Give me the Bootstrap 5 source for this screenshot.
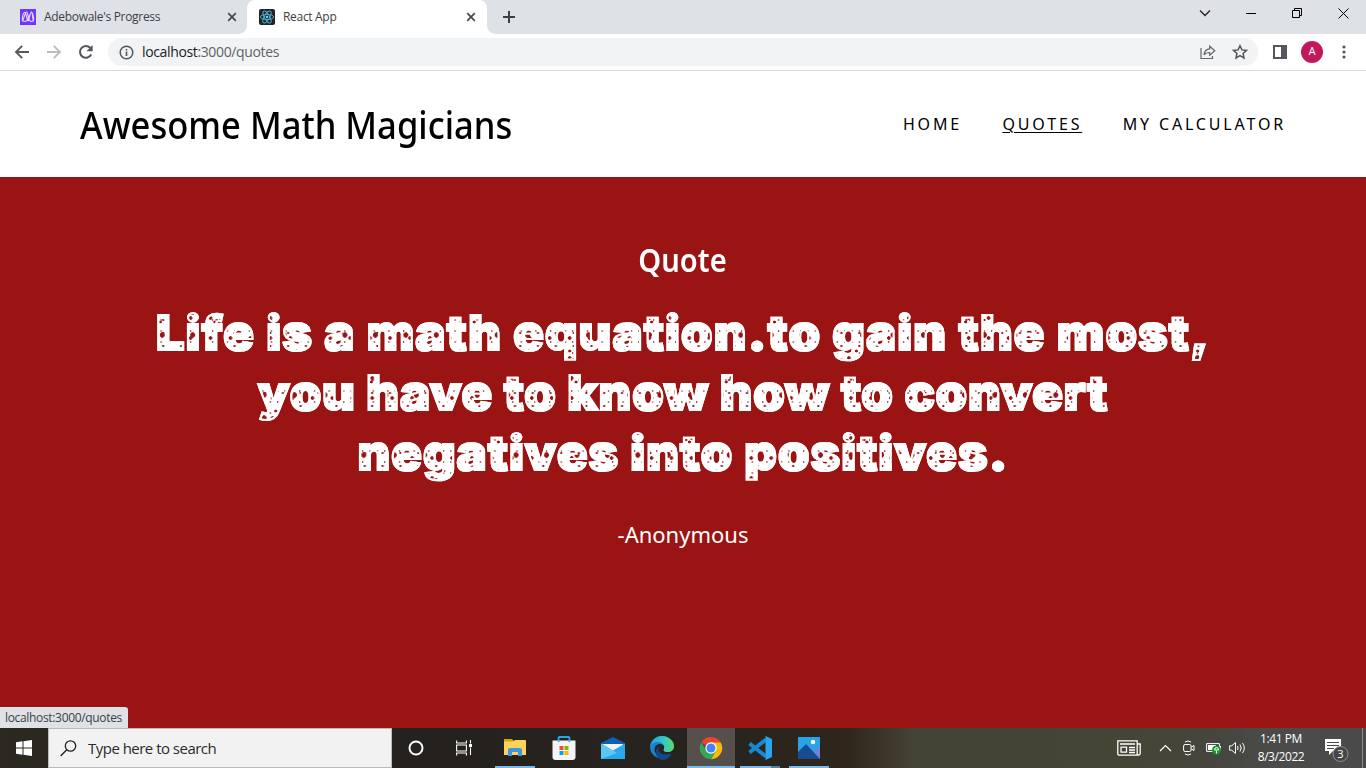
<!DOCTYPE html>
<html lang="en">
<head>
<meta charset="utf-8">
<title>React App</title>
<link href="https://cdn.jsdelivr.net/npm/bootstrap@5.3.0/dist/css/bootstrap.min.css" rel="stylesheet">
<style>
body{width:1366px;height:768px;overflow:hidden;font-family:"Noto Sans","Open Sans",sans-serif;color:#000}
svg{display:block;flex:none}
.cell{display:flex;align-items:center;justify-content:center;flex:none}
.w32{width:32px}.w24{width:24px}.w46{width:46px}.w48{width:48px}.w44{width:44px}.w20{width:20px}
/* browser */
.strip{height:34px;background:#dee1e6;font:12px/16px "Open Sans",sans-serif;color:#3c4043;letter-spacing:-.31px}
.tab-item{height:34px;flex:none}
.tab-item.bg-tab{width:247px;padding:0 8px 0 20px}
.tab-item.live{width:240px;padding:0 9px 0 12px;background:#fff;border-radius:8px 8px 0 0;position:relative}
.tab-item.live::before,.tab-item.live::after{content:"";position:absolute;bottom:0;width:8px;height:8px}
.tab-item.live::before{left:-8px;background:radial-gradient(circle at 0 0,#0000 7.5px,#fff 8px)}
.tab-item.live::after{right:-8px;background:radial-gradient(circle at 100% 0,#0000 7.5px,#fff 8px)}
.tools{height:37px;border-bottom:1px solid #dadce0;padding:0 0 0 6px}
.omni{height:28px;width:1150px;flex:none;border-radius:14px;background:#f1f3f4;font:14px/28px "Open Sans",sans-serif;letter-spacing:-.36px;color:#5f6368;margin-left:6px;padding:0 2px 0 11px}
.omni b{font-weight:400;color:#202124}
.me{width:22px;height:22px;border-radius:50%;background:#c2185b;color:#fff;font:11px/22px Roboto,sans-serif;text-align:center}
/* page */
.site-head{height:106px;padding:0 80px}
.narrow{display:inline-block;transform:scaleX(.91)}
.brand{font-size:38px;line-height:50px;font-weight:500;margin:0;width:440px;white-space:nowrap}
.brand .narrow{transform-origin:0 50%}
.menu{font-size:16px;letter-spacing:2.830px;gap:40.500px;line-height:24px}
.menu a{color:#000;text-decoration:none}
.menu a.on{text-decoration:underline;text-underline-offset:2px;text-decoration-thickness:1px}
.hero{height:551px;background:#9b1414;color:#fff;position:relative}
.hero h2{font-size:32px;line-height:40px;font-weight:600;margin:0;padding-top:63px}
.said{font:900 48px/60px Inter,sans-serif;letter-spacing:1px;margin:23px 0 0;transform:scaleX(1.050)}
.said div{white-space:nowrap}
.said .top-line{letter-spacing:1.100px}
.said .mid{letter-spacing:.75px}
.said span{--r:#9b1414;color:#fff;-webkit-text-fill-color:transparent;-webkit-text-stroke:2px #fff;
background:
radial-gradient(ellipse 2.6px 3.2px at 6px 9px,var(--r) 75%,#0000),
radial-gradient(circle at 14px 15px,var(--r) 1.5px,#0000 2px),
radial-gradient(circle at 4px 19px,var(--r) 1.200px,#0000 1.700px),
radial-gradient(circle at 7px 4px,var(--r) .8px,#0000 1.300px),
radial-gradient(circle at 5px 6px,var(--r) .4px,#0000 1px) #fff;
background-size:29px 23px,19px 20px,13px 29px,17px 13px,7px 11px;
-webkit-background-clip:text;background-clip:text}
.who{font-size:22px;line-height:30px;margin:36px 0 0}
.status-tip{position:absolute;left:0;bottom:0;width:128px;height:21px;background:#dee1e6;border-radius:0 3px 0 0;color:#3c4043;font:12px/21px "Open Sans",sans-serif;letter-spacing:-.330px;padding-left:5px}
/* taskbar */
.taskbar{height:40px;background:linear-gradient(90deg,#2b2920 0,#24211e 30%,#28241e 55%,#30261b 62%,#444435 67%,#454536 82%,#45453c 88%,#4b4b4b 94%,#4a4a4a);color:#fff}
.find{width:344px;height:40px;background:#f2f2f2;border:1px solid #bbb;color:#2b2b2b;font:15px/38px "Open Sans",sans-serif;letter-spacing:-.520px;padding-left:11px;gap:11px}
.gap-r{margin-right:3px}
.app{width:48px;height:40px;position:relative;margin-right:1px}
.app.open::after{content:"";position:absolute;left:4px;right:4px;bottom:0;height:2px;background:#76b9ed}
.app.now{background:#55504c}.app.now::after{left:0;right:0}
.app.multi::after{background:linear-gradient(90deg,#76b9ed 31px,#5583a7 31px)}
.clock{width:64px;font:12px/18px "Open Sans",sans-serif;letter-spacing:-.420px;text-align:center}
.notes{width:49px;padding:4px 2px 0 0}
.peek{width:4px;height:40px;border-left:1px solid #8a8a8a}
</style>
</head>
<body class="d-flex flex-column bg-white">
<div class="strip d-flex align-items-center">
  <div class="tab-item bg-tab d-flex align-items-center">
    <svg width="16" height="16" viewBox="0 0 16 16"><path fill="#6f37ff" d="M0 0h16v16H0z"/><g fill="none" stroke="#e8dcff" stroke-width="1.1"><path d="M2 12C4 11 5 3 6.500 3S8 12 11 12.500c2.500 0 3-2 2.500-4C13 5 12.400 3.500 11.300 3.500 9.500 3.500 9 12.500 5 12.500 2.500 12.500 2 10.500 2.500 8 3 5 3.600 3.500 4.700 3.500 6.500 3.500 7 12 8 12s2-9 3.500-9S12 11 14 12"/></g></svg>
    <span class="ms-2">Adebowale's Progress</span>
    <svg class="ms-auto" width="14" height="14" viewBox="0 0 14 14"><path d="M3.200 3.200l7.600 7.600M10.800 3.200l-7.600 7.600" stroke="#45484c" stroke-width="1.700"/></svg>
  </div>
  <div class="tab-item live d-flex align-items-center">
    <svg width="16" height="16" viewBox="0 0 16 16"><rect width="16" height="16" rx="2" fill="#20232a"/><g fill="none" stroke="#4fb3cc" stroke-width=".9"><ellipse cx="8" cy="8" rx="6.700" ry="2.600"/><ellipse cx="8" cy="8" rx="6.700" ry="2.600" transform="rotate(60 8 8)"/><ellipse cx="8" cy="8" rx="6.700" ry="2.600" transform="rotate(120 8 8)"/></g><circle cx="8" cy="8" r="1.300" fill="#61dafb"/></svg>
    <span class="ms-2">React App</span>
    <svg class="ms-auto" width="14" height="14" viewBox="0 0 14 14"><path d="M3.200 3.200l7.600 7.600M10.800 3.200l-7.600 7.600" stroke="#45484c" stroke-width="1.700"/></svg>
  </div>
  <svg class="mx-3" width="12" height="12" viewBox="0 0 12 12"><path d="M6 0v12M0 6h12" stroke="#3c4043" stroke-width="2"/></svg>
  <div class="d-flex ms-auto pb-1 mb-1">
    <div class="cell w46"><svg width="12" height="8" viewBox="0 0 12 8"><path d="M1 1.500l5 5 5-5" fill="none" stroke="#222" stroke-width="1.300"/></svg></div>
    <div class="cell w46"><svg width="10" height="1"><path d="M0 0h10v1H0z"/></svg></div>
    <div class="cell w46"><svg width="10" height="10" viewBox="0 0 10 10"><path d="M.5 2.500h7v7h-7zM2.500 2.500v-2h7v7h-2" fill="none" stroke="#000"/></svg></div>
    <div class="cell w46"><svg width="11" height="11" viewBox="0 0 11 11"><path d="M.5.5l10 10M10.500.5l-10 10" fill="none" stroke="#000"/></svg></div>
  </div>
</div>
<div class="tools d-flex align-items-center">
  <div class="cell w32"><svg width="16" height="16" viewBox="0 0 16 16"><path d="M15 8H2.500M8.200 1.800L2 8l6.200 6.200" fill="none" stroke="#54585d" stroke-width="1.900"/></svg></div>
  <div class="cell w32"><svg width="16" height="16" viewBox="0 0 16 16"><path d="M1 8h12.500M7.800 1.800L14 8l-6.200 6.200" fill="none" stroke="#b9bcc0" stroke-width="1.900"/></svg></div>
  <div class="cell w32"><svg width="16" height="16" viewBox="0 0 16 16"><path d="M13.200 10.500A5.900 5.900 0 1 1 12.200 3.800L13 4.700" fill="none" stroke="#54585d" stroke-width="2"/><path fill="#54585d" d="M14.700 1v6.300H8.400z"/></svg></div>
  <div class="omni d-flex align-items-center">
    <svg class="me-2" width="15" height="15" viewBox="0 0 15 15"><circle cx="7.500" cy="7.500" r="6.300" fill="none" stroke="#54585d" stroke-width="1.500"/><path d="M6.700 6.600h1.600v4.300H6.700zM6.700 3.900h1.600v1.600H6.700z" fill="#54585d"/></svg>
    <span><b>localhost</b>:3000/quotes</span>
    <div class="cell w32 ms-auto"><svg width="16" height="16" viewBox="0 0 16 16"><path d="M1 4v10.500h11.500V12" fill="none" stroke="#63676b" stroke-width="1.200"/><path d="M9.700 2.200L14.800 6.700l-5.100 4.500V8.500C7 8.400 5.300 9 4 10.800 4.400 7.500 6.200 5.200 9.700 4.900z" fill="none" stroke="#63676b" stroke-width="1.200"/></svg></div>
    <div class="cell w32"><svg width="16" height="16" viewBox="0 0 16 16"><path d="M8 1.700l1.900 4.200 4.600.5-3.400 3.100.9 4.500-4-2.300-4 2.300.9-4.500L1.500 6.400l4.600-.5z" fill="none" stroke="#54585d" stroke-width="1.500"/></svg></div>
  </div>
  <div class="cell w44"><svg width="14" height="14" viewBox="0 0 14 14"><path fill="#54585d" fill-rule="evenodd" d="M0 0h14v14H0zM2 2v10h6V2z"/></svg></div>
  <div class="cell w20"><div class="me flex-shrink-0">A</div></div>
  <div class="cell w44"><svg width="4" height="14" viewBox="0 0 4 14"><g fill="#54585d"><circle cx="2" cy="2" r="1.600"/><circle cx="2" cy="7" r="1.600"/><circle cx="2" cy="12" r="1.600"/></g></svg></div>
</div>
<header class="site-head d-flex align-items-center justify-content-between">
  <h1 class="brand"><span class="narrow">Awesome Math Magicians</span></h1>
  <nav class="menu d-flex">
    <a href="#">HOME</a><a href="#" class="on">QUOTES</a><a href="#">MY CALCULATOR</a>
  </nav>
</header>
<main class="hero text-center">
  <h2><span class="narrow">Quote</span></h2>
  <div class="said">
    <div class="top-line"><span>Life is a math equation.to gain the most,</span></div>
    <div class="mid"><span>you have to know how to convert</span></div>
    <div><span>negatives into positives.</span></div>
  </div>
  <p class="who">-Anonymous</p>
  <div class="status-tip text-start">localhost:3000/quotes</div>
</main>
<footer class="taskbar d-flex align-items-center">
  <div class="cell w48"><svg width="16" height="16" viewBox="0 0 16 16"><path fill="#fff" d="M0 2.200L6.500 1.300v6.200H0zM7.500 1.200L16 0v7.500H7.500zM0 8.500h6.500v6.200L0 13.800zM7.500 8.500H16V16l-8.500-1.200z"/></svg></div>
  <div class="find d-flex align-items-center">
    <svg width="17" height="17" viewBox="0 0 17 17"><circle cx="10.500" cy="6" r="5.200" fill="none" stroke="#222" stroke-width="1.300"/><path d="M6.800 9.700L.6 16" stroke="#222" stroke-width="1.400"/></svg>
    <span>Type here to search</span>
  </div>
  <div class="cell w48"><svg width="16" height="16"><circle cx="8" cy="8" r="6.500" fill="none" stroke="#fff" stroke-width="2"/></svg></div>
  <div class="cell w48 gap-r"><svg width="16" height="16" viewBox="0 0 16 16"><g fill="none" stroke="#fff" stroke-width="1.100"><path d="M.6.500v2.500h9.800V.500M.6 15.500V13h9.800v2.500M.6 5h9.800v6H.6zM14.500 0v3.500M14.500 7.500V15"/></g><path d="M13 4h3v3h-3z" fill="#fff"/></svg></div>
  <div class="cell app open"><svg width="22" height="20" viewBox="0 0 22 20"><path fill="#e0a100" d="M0 1h8l2 2v4H0z"/><path fill="#ffd35a" d="M0 3.500h9L11 2h10a1 1 0 0 1 1 1v14H0z"/><path fill="#3e96dd" d="M4 18v-6a2 2 0 0 1 2-2h10a2 2 0 0 1 2 2v6h-4v-4H8v4z"/></svg></div>
  <div class="cell app"><svg width="24" height="24" viewBox="0 0 24 24"><path fill="none" stroke="#21a7ea" stroke-width="1.800" d="M6.500 6V2q0-1 1-1h9q1 0 1 1v4"/><path fill="#f3f4f6" d="M.5 4.500h23V21a3 3 0 0 1-3 3h-17a3 3 0 0 1-3-3z"/><path fill="#21a7ea" d="M5.600 4.500h1.800V6H5.600zM16.600 4.500h1.800V6h-1.800z"/><path fill="#f25022" d="M7.500 10h4v4h-4z"/><path fill="#7fba00" d="M12.500 10h4v4h-4z"/><path fill="#00a4ef" d="M7.500 15h4v4h-4z"/><path fill="#ffb900" d="M12.500 15h4v4h-4z"/></svg></div>
  <div class="cell app"><svg width="24" height="22" viewBox="0 0 24 22"><path fill="#0f5fb5" d="M0 6L12 0l12 6v6H0z"/><path fill="#f4f4f4" d="M2 7h20v4l-10 5L2 11z"/><path fill="#29a8ea" d="M0 6.500l12 7 12-7V22H0z"/><path fill="#59c8f6" d="M0 22V6.500L16 16z"/></svg></div>
  <div class="cell app"><svg width="24" height="24" viewBox="0 0 24 24"><defs><linearGradient id="e1"><stop stop-color="#239ee0"/><stop offset=".6" stop-color="#38c9c8"/><stop offset="1" stop-color="#60d957"/></linearGradient></defs><path fill="#1683d2" d="M0 11C1 4 6 0 12 0s12 4.500 12 10c0 4-3 6-6.500 6-3 0-5-1-3.500-3 1-2 0-5-4-5-5 0-7 5-4 10 2 4 6 5 10 4A12 12 0 0 1 0 11z"/><path fill="url(#e1)" d="M0 11C1 4 6 0 12 0s12 4.500 12 10c0 4-3 6-6.500 6-3 0-4.500-1-3.500-3 1-3-1-7-6-7-4 0-7 2-8 5z"/><path fill="#114a8c" d="M8.500 10C7 17 13 20 21.500 17.500 19.500 22 16 24 12 24 6 23 4 15 8.500 10z"/></svg></div>
  <div class="cell app open now"><svg width="24" height="24" viewBox="0 0 24 24"><path fill="#ea4335" d="M12 12L2.300 6.500a11.200 11.200 0 0 1 19.400 0z"/><path fill="#fbbc05" d="M12 12V6.400h9.700A11.200 11.200 0 0 1 12 23.200l4.800-8.400z"/><path fill="#34a853" d="M2.300 6.400l4.900 8.400L12 17.600l4.800-2.800L12 23.200A11.200 11.200 0 0 1 2.300 6.400z"/><circle cx="12" cy="12" r="5.700" fill="#fff"/><circle cx="12" cy="12" r="4.500" fill="#4285f4"/></svg></div>
  <div class="cell app open multi"><svg width="24" height="24" viewBox="0 0 24 24"><path d="M1.500 7.500L18 20.500M1.500 16.500L18 3.500" stroke="#1689d2" stroke-width="4"/><path fill="#2ba6ee" d="M17.500 0L24 3v18l-6.500 3z"/></svg></div>
  <div class="cell app open"><svg width="22" height="22" viewBox="0 0 22 22"><path fill="#2ba3e8" d="M0 0h22v22H0z"/><path fill="#6a86d8" d="M22 9v13H10l5-8z"/><path fill="#174b92" d="M0 15l8-8 14 15H0z"/><circle cx="15" cy="5" r="2.200" fill="#fff"/></svg></div>
  <div class="cell w48 ms-auto"><svg width="24" height="16" viewBox="0 0 24 16"><g fill="none" stroke="#fff" stroke-width="1.300"><path d="M.8.800h19.400v14.400H2.300a1.500 1.500 0 0 1-1.500-1.500zM20.500 4h2.700v9.500c0 2-3 2-3 0M3 4h15M4 7.200h5.500v5H4zM12 7.500h6M12 10h6M12 12.500h6"/></g></svg></div>
  <div class="cell w24"><svg width="13" height="8" viewBox="0 0 13 8"><path d="M1 7l5.500-5.500L12 7" fill="none" stroke="#fff" stroke-width="1.200"/></svg></div>
  <div class="cell w24"><svg width="12" height="16" viewBox="0 0 12 16"><g fill="none" stroke="#fff"><rect x=".6" y="4.500" width="7.500" height="7" rx="1.500"/><path d="M8.500 7L11 5.500v5L8.500 9M2 2q3-2 6 0M2 14q3 2 6 0"/></g></svg></div>
  <div class="cell w24"><svg width="15" height="14" viewBox="0 0 15 14"><path d="M.6 2.600h12.800v7.800H.6z" fill="none" stroke="#fff"/><path fill="#fff" d="M2 4h8v5H2zM13.500 5H15v3h-1.500z"/><circle cx="10.500" cy="9" r="4.500" fill="#129a2b"/><path d="M10.500 12.500V9.500M8.500 9q0-2.500 2-2.500t2 2.500z" fill="none" stroke="#fff"/></svg></div>
  <div class="cell w24"><svg width="17" height="14" viewBox="0 0 17 14"><path d="M.6 4.800h2.200L6.500 1.500v11L2.800 9.200H.6zM8.500 5q1.200 2 0 4M11 3.500q2.400 3.500 0 7M13.500 2q3.600 5 0 10" fill="none" stroke="#fff"/></svg></div>
  <div class="clock flex-shrink-0"><div>1:41 PM</div><div>8/3/2022</div></div>
  <div class="cell notes"><svg width="26" height="26" viewBox="0 0 26 26"><path fill="#fff" d="M1 2h16v12H9l-4 4v-4H1z"/><path d="M3 5.500h12M3 8.500h12M3 11.500h7" stroke="#4a4a4a"/><circle cx="16.500" cy="17" r="7.500" fill="#464646" stroke="#8f8f8f"/><text x="16.500" y="21" text-anchor="middle" font-size="11" font-family="Open Sans" fill="#fff">3</text></svg></div>
  <div class="peek"></div>
</footer>
<script src="https://cdn.jsdelivr.net/npm/bootstrap@5.3.0/dist/js/bootstrap.bundle.min.js"></script>
</body>
</html>
